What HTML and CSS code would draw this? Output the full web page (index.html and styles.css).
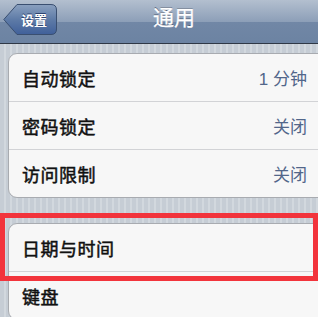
FILE: index.html
```html
<!DOCTYPE html>
<html lang="zh">
<head>
<meta charset="UTF-8" />
<meta name="viewport" content="width=device-width, initial-scale=1" />
<title>通用</title>
<link rel="stylesheet" href="styles.css">
</head>
<body>

<div class="screen">
  <div class="navbar">
    <a class="back" href="#">
      <svg class="back-shape" width="54" height="31" viewBox="0 0 54 31">
        <defs>
          <linearGradient id="bg" x1="0" y1="0" x2="0" y2="1">
            <stop offset="0" stop-color="#8aa0bf" />
            <stop offset="0.5" stop-color="#5e7ba7" />
            <stop offset="1" stop-color="#40609a" />
          </linearGradient>
        </defs>
        <path d="M14 0.5 H48 Q53.5 0.5 53.5 6 V25 Q53.5 30.5 48 30.5 H14 L0.8 15.5 Z" fill="url(#bg)" stroke="#3a4f70" stroke-width="1" />
      </svg>
      <span class="back-label">设置</span>
    </a>
    <h1 class="title">通用</h1>
  </div>

  <div class="group first">
    <div class="row"><span class="label">自动锁定</span><span class="value">1 分钟</span></div>
    <div class="row"><span class="label">密码锁定</span><span class="value">关闭</span></div>
    <div class="row"><span class="label">访问限制</span><span class="value">关闭</span></div>
  </div>

  <div class="group second">
    <div class="row"><span class="label">日期与时间</span></div>
    <div class="row"><span class="label">键盘</span></div>
  </div>

  <div class="highlight"></div>
</div>

</body>
</html>
```

FILE: styles.css
```css
html, body { margin: 0; padding: 0; overflow: hidden; }
body { width: 318px; height: 317px; font-family: "Liberation Sans", "Noto Sans CJK SC", sans-serif; }
.screen {
  position: relative;
  width: 318px;
  height: 317px;
  overflow: hidden;
  background: repeating-linear-gradient(90deg, #c6cdd5 0, #c6cdd5 4px, #d2d8de 4px, #d2d8de 6px);
}
.navbar {
  height: 43px;
  border-bottom: 1px solid #2f3846;
  background: linear-gradient(#b3bfcf, #8d9fb8 50%, #7187a6 51%, #6c83a2);
  display: flex;
  align-items: center;
  position: relative;
}
.back {
  position: relative;
  width: 54px;
  height: 31px;
  margin: -4px 0 0 3px;
  display: flex;
  align-items: center;
  justify-content: center;
  text-decoration: none;
}
.back-shape { position: absolute; left: 0; top: 0; }
.back-label {
  position: relative;
  color: #fff;
  font-size: 13px;
  font-weight: bold;
  padding-left: 8px;
  text-shadow: 0 -1px 0 #2e4470;
}
.title {
  position: absolute;
  left: 0;
  right: -30px;
  top: 6px;
  margin: 0;
  text-align: center;
  color: #fff;
  font-size: 21px;
  font-weight: normal;
  line-height: 24px;
  -webkit-text-stroke: 0.3px #fff;
  text-shadow: 0 -1px 0 #4d5d76;
}
.group {
  margin: 0 -22px 0 8px;
  background: #f7f7f7;
  border: 1px solid #a8abb0;
  border-radius: 9px;
}
.group.first { margin-top: 9px; }
.group.second { margin-top: 25px; }
.row {
  height: 47px;
  display: flex;
  align-items: center;
  justify-content: space-between;
  padding: 0 32px 0 13px;
  border-bottom: 1px solid #d2d3d6;
}
.row:last-child { border-bottom: none; }
.label {
  font-size: 18px;
  color: #111;
  letter-spacing: 0.5px;
  -webkit-text-stroke: 0.5px #111;
}
.value { font-size: 17px; color: #52668a; }
.highlight {
  position: absolute;
  left: 0;
  top: 213px;
  width: 318px;
  height: 68px;
  box-sizing: border-box;
  border: 5px solid #f2343c;
}
```
